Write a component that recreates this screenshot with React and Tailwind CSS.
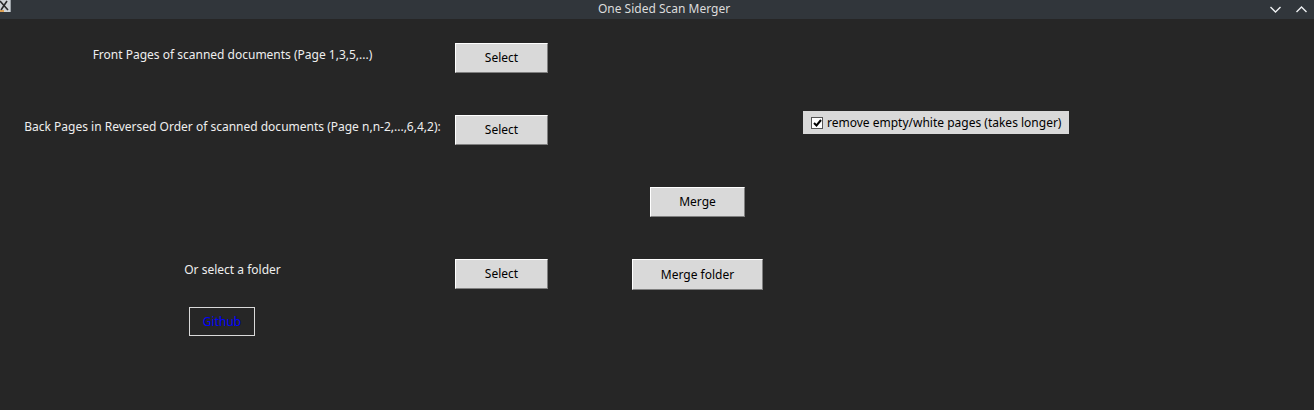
import React from "react";

const font = { fontFamily: '"Noto Sans", "Open Sans", sans-serif' };

function TkButton({ children, className = "" }) {
  return (
    <button
      className={`flex h-[30px] items-center justify-center border border-t-white border-l-white border-r-[#7f7f7f] border-b-[#7f7f7f] bg-[#d9d9d9] text-[12px] text-black ${className}`}
    >
      {children}
    </button>
  );
}

function TitleBar() {
  return (
    <div className="flex h-[19px] items-center justify-between bg-[#31363b] text-[12px] text-[#dcdcdc]">
      <div className="flex w-[120px] items-start self-start">
        {/* app icon, cut off at the left edge */}
        <svg width="11" height="12" viewBox="0 0 11 12">
          <rect x="0" y="0" width="11" height="12" fill="#cfd3d6" />
          <path d="M0 1 L8 10 M7 1 L1 10" stroke="#2a2a2a" strokeWidth="1.6" />
          <path d="M0 11 L4 11" stroke="#e0902a" strokeWidth="1.5" />
          <rect x="10" y="0" width="1" height="12" fill="#9aa0a5" />
        </svg>
      </div>
      <span className="-mt-[2px] ml-[14px] whitespace-nowrap">One Sided Scan Merger</span>
      <div className="flex w-[120px] items-center justify-end gap-[15px] pr-[7px]">
        <svg width="11" height="7" viewBox="0 0 11 7">
          <path d="M0.5 1 L5.5 6 L10.5 1" fill="none" stroke="#eef1f3" strokeWidth="1.4" />
        </svg>
        <svg width="11" height="7" viewBox="0 0 11 7">
          <path d="M0.5 6 L5.5 1 L10.5 6" fill="none" stroke="#eef1f3" strokeWidth="1.4" />
        </svg>
      </div>
    </div>
  );
}

export default function App() {
  return (
    <div className="h-[410px] w-[1314px] overflow-hidden bg-[#262626]" style={font}>
      <TitleBar />

      <div className="grid grid-cols-[445px_93px_255px_266px] grid-rows-[72px_72px_72px_48px_29px] whitespace-nowrap pl-[10px] pt-[24px] text-[12px] leading-[18px]">
        {/* row 0 */}
        <span className="mt-[3px] justify-self-center text-[#eeeeee]">
          Front Pages of scanned documents (Page 1,3,5,...)
        </span>
        <TkButton className="w-[93px]">Select</TkButton>
        <div />
        <div />

        {/* row 1 */}
        <span className="mt-[3px] justify-self-center text-[#eeeeee]">
          Back Pages in Reversed Order of scanned documents (Page n,n-2,...,6,4,2):
        </span>
        <TkButton className="w-[93px]">Select</TkButton>
        <div />
        <label className="-mt-[4px] flex h-[23px] w-[266px] items-center gap-[4px] self-start bg-[#d9d9d9] pl-[8px] text-black">
          <span className="flex h-[12px] w-[12px] items-center justify-center border border-[#555] bg-white">
            <svg width="9" height="8" viewBox="0 0 9 8">
              <path d="M1 4 L3.5 6.5 L8 1" fill="none" stroke="#000" strokeWidth="2" />
            </svg>
          </span>
          remove empty/white pages (takes longer)
        </label>

        {/* row 2 */}
        <div />
        <div />
        <TkButton className="ml-[102px] w-[95px]">Merge</TkButton>
        <div />

        {/* row 3 */}
        <span className="mt-[2px] justify-self-center text-[#eeeeee]">Or select a folder</span>
        <TkButton className="w-[93px]">Select</TkButton>
        <TkButton className="ml-[84px] h-[31px] w-[131px]">Merge folder</TkButton>
        <div />

        {/* row 4 */}
        <button className="ml-[179px] flex h-[29px] w-[66px] items-center justify-center border border-[#d9d9d9] text-[12px] text-[#0000ff]">
          Github
        </button>
      </div>
    </div>
  );
}
